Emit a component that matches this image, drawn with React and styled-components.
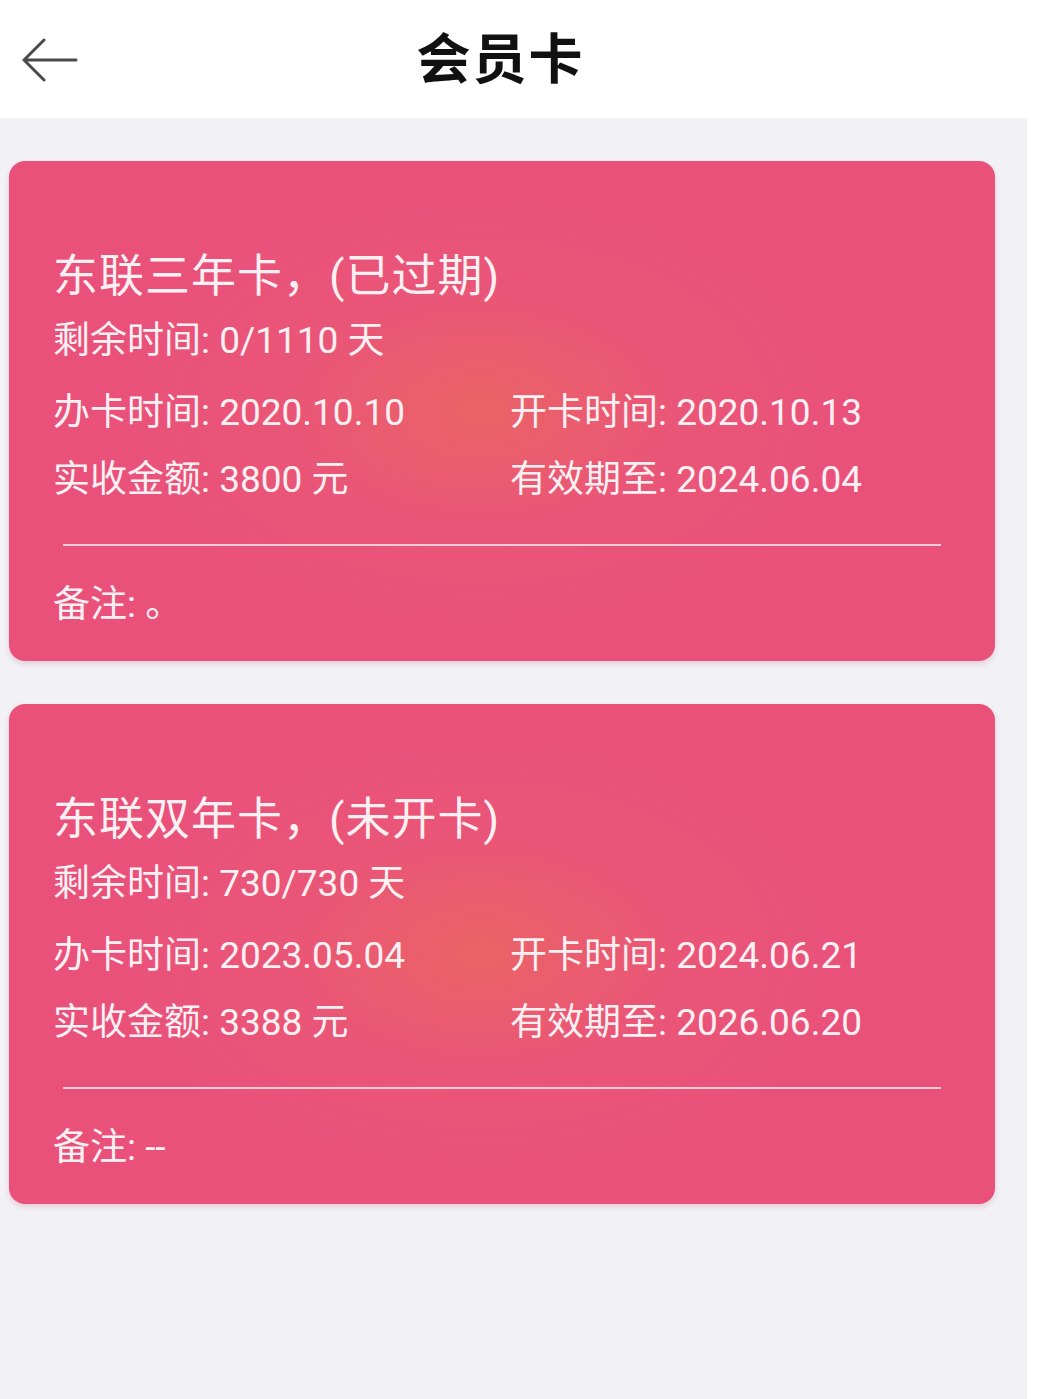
import React from 'react';
import styled, { createGlobalStyle } from 'styled-components';

const GlobalStyle = createGlobalStyle`
  html, body {
    margin: 0;
    padding: 0;
    background: #ffffff;
  }
  body {
    font-family: Roboto, "Noto Sans CJK SC", sans-serif;
  }
`;

const Page = styled.div`
  width: 1027px;
  min-height: 1399px;
  background: #f2f2f6;
`;

const Header = styled.header`
  position: relative;
  height: 118px;
  background: #ffffff;
  display: flex;
  align-items: center;
  justify-content: center;
`;

const BackButton = styled.button`
  position: absolute;
  left: 18px;
  top: 34px;
  width: 62px;
  height: 52px;
  padding: 0;
  border: none;
  background: transparent;
  display: flex;
  align-items: center;
  justify-content: center;
`;

const Title = styled.h1`
  margin: -8px 0 0 -26px;
  font-family: "Noto Sans CJK SC", sans-serif;
  font-size: 54px;
  font-weight: 700;
  color: #111;
  letter-spacing: 2px;
`;

const List = styled.main`
  padding: 43px 32px 0 9px;
  display: flex;
  flex-direction: column;
  gap: 43px;
`;

const Card = styled.section`
  border-radius: 16px;
  padding: 88px 0 31px;
  color: #fdf0f3;
  background:
    radial-gradient(ellipse 38% 45% at 48% 50%, rgba(235, 105, 95, 0.75) 0%, rgba(235, 95, 110, 0.35) 50%, rgba(233, 80, 122, 0) 100%),
    #e9517b;
  box-shadow: 0 3px 6px rgba(180, 40, 80, 0.18);
`;

const Body = styled.div`
  padding: 0 44px;
`;

const CardName = styled.div`
  font-size: 45px;
  line-height: 56px;
  font-weight: 400;
  letter-spacing: 1px;
  margin-bottom: 11px;
`;

const Line = styled.div`
  font-size: 37px;
  line-height: 50px;
  white-space: nowrap;
`;

const Grid = styled.div`
  margin-top: 22px;
  display: grid;
  grid-template-columns: 457px 1fr;
  row-gap: 17px;
`;

const Divider = styled.hr`
  margin: 39px 54px 34px;
  border: none;
  height: 2px;
  background: rgba(255, 225, 235, 0.85);
`;

const ArrowIcon = () => (
  <svg width="58" height="44" viewBox="0 0 58 44" fill="none">
    <path d="M56 22H4M24 2L4 22l20 20" stroke="#4a4a4a" strokeWidth="3" strokeLinecap="round" strokeLinejoin="round" />
  </svg>
);

const cards = [
  {
    name: '东联三年卡，(已过期)',
    remain: '0/1110 天',
    issued: '2020.10.10',
    opened: '2020.10.13',
    paid: '3800 元',
    expires: '2024.06.04',
    note: '。',
  },
  {
    name: '东联双年卡，(未开卡)',
    remain: '730/730 天',
    issued: '2023.05.04',
    opened: '2024.06.21',
    paid: '3388 元',
    expires: '2026.06.20',
    note: '--',
  },
];

export default function App() {
  return (
    <>
      <GlobalStyle />
      <Page>
        <Header>
          <BackButton aria-label="返回">
            <ArrowIcon />
          </BackButton>
          <Title>会员卡</Title>
        </Header>
        <List>
          {cards.map((c) => (
            <Card key={c.name}>
              <Body>
                <CardName>{c.name}</CardName>
                <Line>剩余时间: {c.remain}</Line>
                <Grid>
                  <Line>办卡时间: {c.issued}</Line>
                  <Line>开卡时间: {c.opened}</Line>
                  <Line>实收金额: {c.paid}</Line>
                  <Line>有效期至: {c.expires}</Line>
                </Grid>
              </Body>
              <Divider />
              <Body>
                <Line>备注: {c.note}</Line>
              </Body>
            </Card>
          ))}
        </List>
      </Page>
    </>
  );
}
